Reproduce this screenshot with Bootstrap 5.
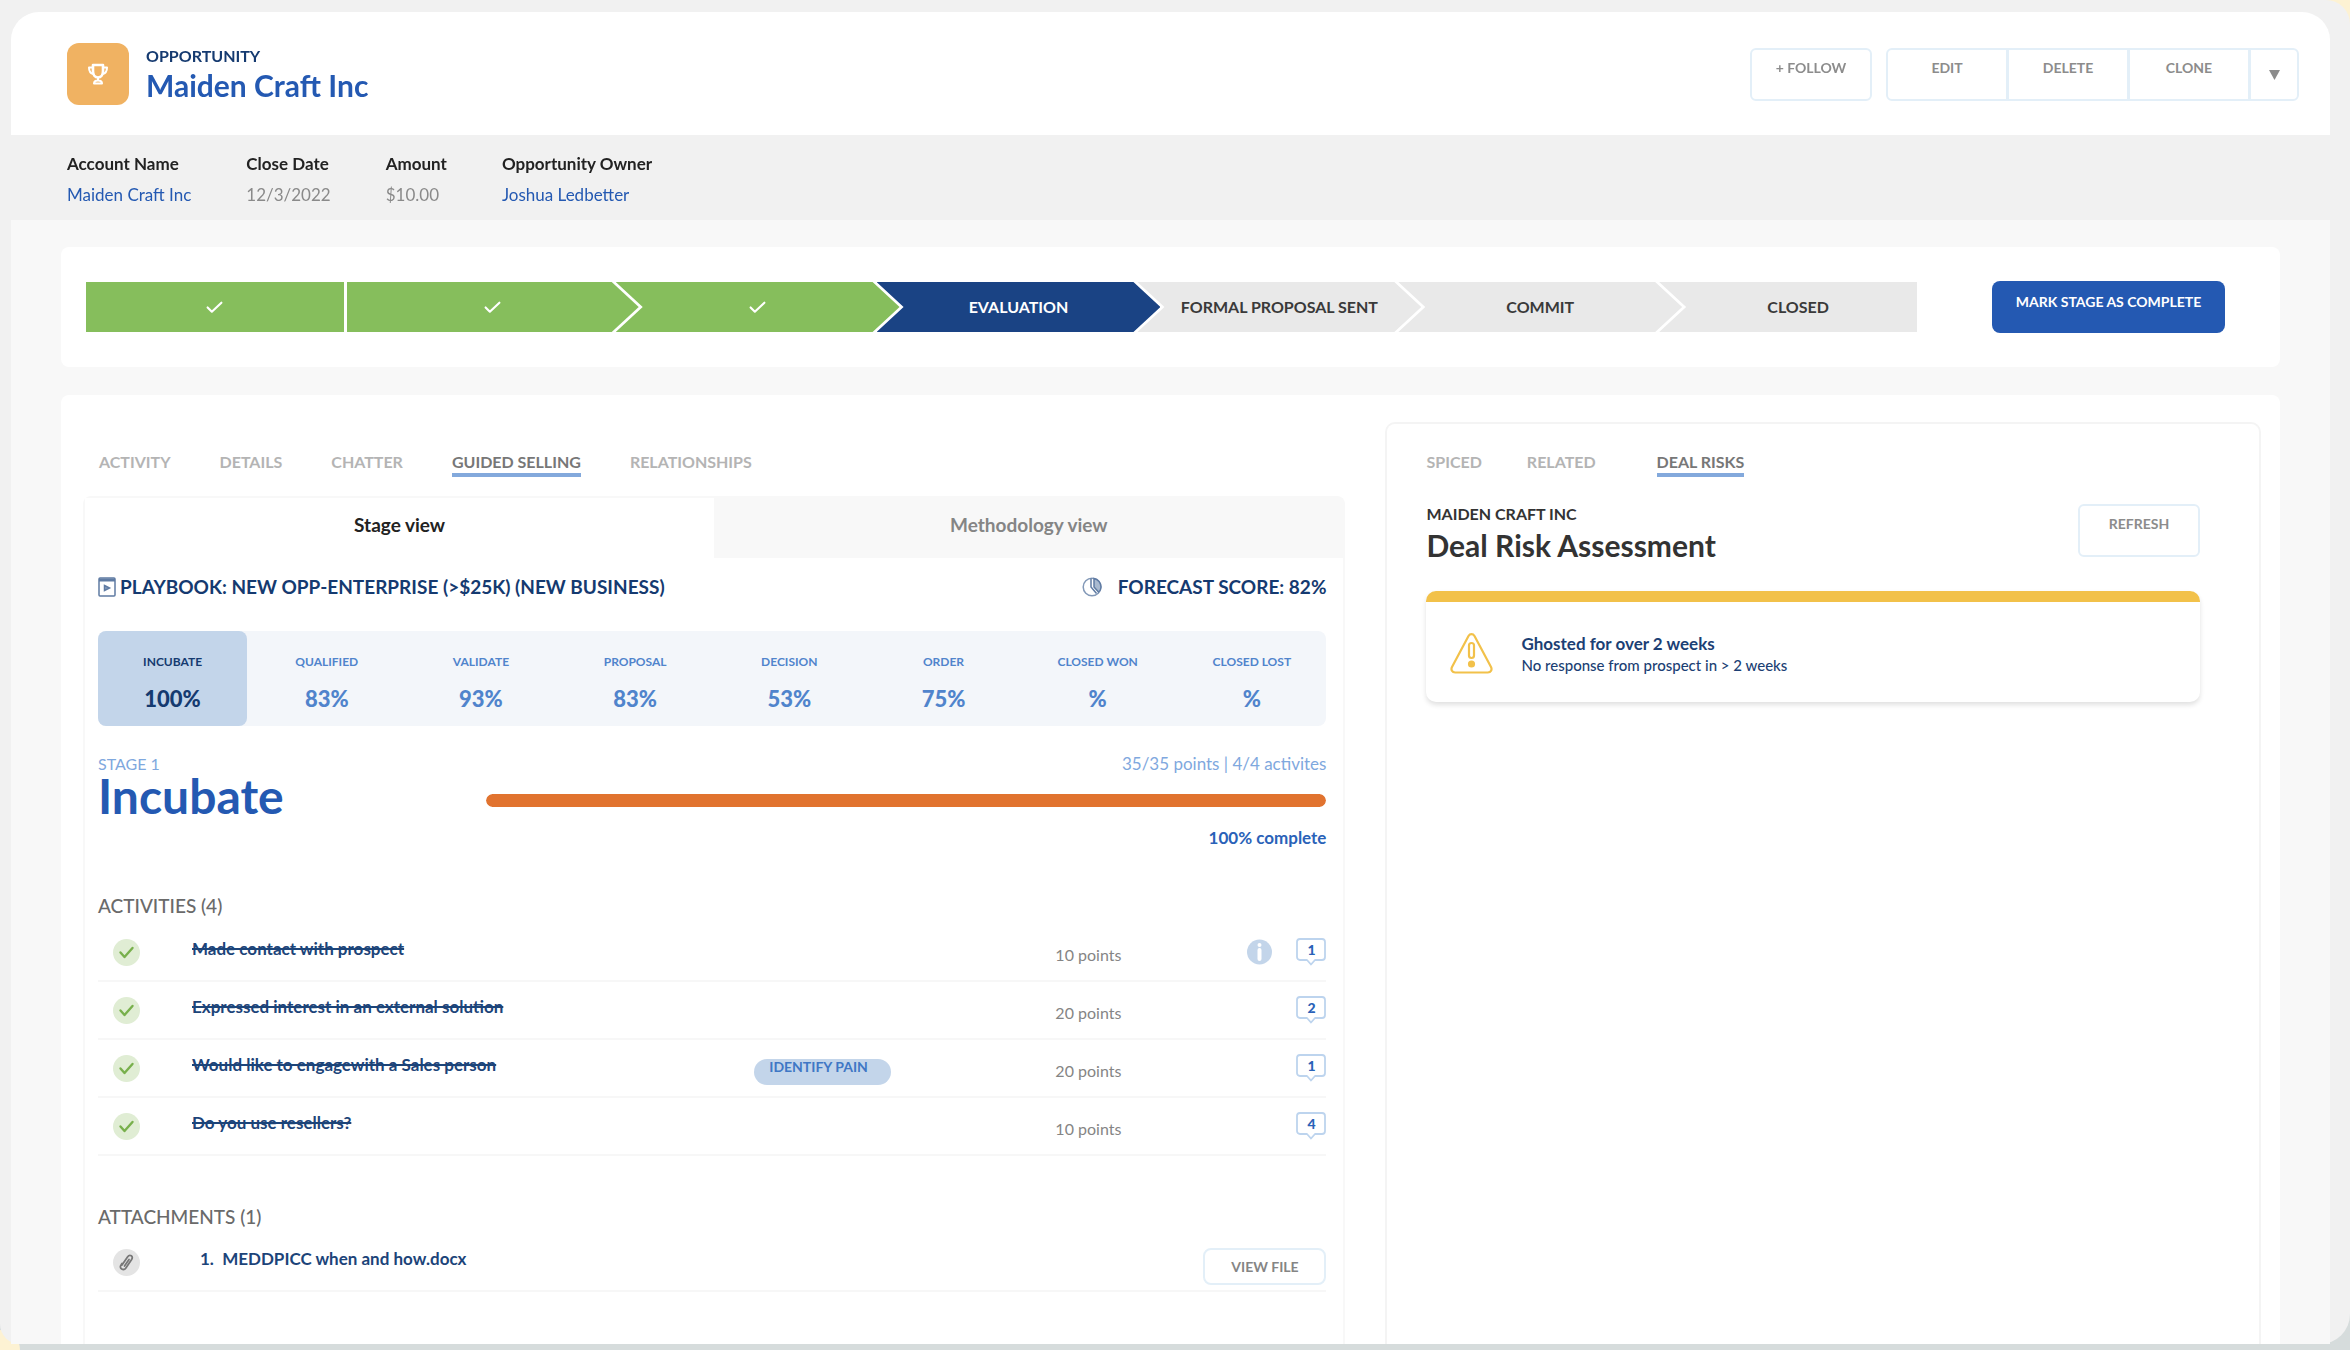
<!DOCTYPE html>
<html lang="en">
<head>
<meta charset="utf-8">
<meta name="viewport" content="width=device-width, initial-scale=1">
<title>Maiden Craft Inc – Opportunity</title>
<link href="https://cdn.jsdelivr.net/npm/bootstrap@5.3.0/dist/css/bootstrap.min.css" rel="stylesheet">
<style>
  :root { --navy:#153a70; --royal:#2459b2; --sky:#c3d5ea; --mist:#f3f6fa; --line:#e3eff8; --soft:#f8f8f8; }
  body { background:#d6dcdc; font-family:Lato, "Open Sans", sans-serif; font-size:16px; line-height:20px; color:#222; overflow-x:hidden; }
  a { text-decoration:none; }
  .frame { min-height:calc(100vh - 6px); background:#f1f1f1; border-radius:0 24px 30px 20px; padding:12px 20px 0 11px; }
  .corner-a, .corner-b { position:fixed; background:#fdf2d3; z-index:-1; }
  .corner-a { left:0; bottom:0; width:20px; height:20px; border-radius:0 20px 0 0; }
  .corner-b { right:0; top:0; width:24px; height:24px; }
  .topbar { background:#fff; border-radius:28px 28px 0 0; padding:31px 31px 30px 56px; }
  .trophy { width:62px; height:62px; border-radius:12px; background:#f0b262; margin-right:17px; }
  .eyebrow { font-weight:700; color:var(--navy); }
  .headline { font-size:30px; line-height:34px; font-weight:700; margin:2px 0 0; }
  .royal { color:var(--royal); }
  .tool { background:#fff; border:2px solid var(--line); border-radius:6px; color:#8c8c8c; font-size:14px; line-height:20px; font-weight:700; padding:8px 0 21px; width:122px; }
  .tool:hover { background:var(--mist); border-color:var(--line); color:#777; }
  .tools { gap:14px; }
  .tools .btn-group .tool + .tool { margin-left:-1px; }
  .tool.caret { width:50px; padding:14px 0 15px; }
  .facts { padding:19px 56px 15px; gap:55px; font-size:17px; }
  .facts dt { font-weight:700; margin-bottom:11px; }
  .facts dd { margin:0; color:#8a8a8a; }
  .facts a { color:var(--royal); }
  .stagearea { background:var(--soft); padding:27px 50px 0; gap:28px; }
  .sheet { background:#fff; border-radius:8px; }
  .pathcard { padding:34px 55px 34px 25px; gap:75px; }
  .path { height:50px; list-style:none; margin:0; padding:0; }
  .path li { flex:284 1 0; background:#e9e9e9; color:#3a3a3a; font-weight:700; margin-left:-23px; clip-path:polygon(0 0, calc(100% - 27px) 0, 100% 50%, calc(100% - 27px) 100%, 0 100%, 27px 50%); }
  .path li.first { flex-grow:258; margin:0 3px 0 0; clip-path:none; }
  .path li.second { flex-grow:292; margin:0; clip-path:polygon(0 0, calc(100% - 27px) 0, 100% 50%, calc(100% - 27px) 100%, 0 100%); }
  .path li.last { flex-grow:258; text-indent:20px; clip-path:polygon(0 0, 100% 0, 100% 100%, 0 100%, 27px 50%); }
  .path li.done { background:#86be5c; }
  .path li.now { background:#1a4384; color:#fff; }
  .markdone { width:233px; height:52px; background:var(--royal); color:#fff; border:0; border-radius:8px; font-size:14px; line-height:20px; font-weight:700; padding:11px 0 21px; }
  .markdone:hover { background:#1d4c9b; color:#fff; }
  .detail { border-radius:8px 8px 0 0; padding:0 19px 0 22px; gap:40px; }
  .leftside { flex:1 1 0; padding-top:57px; min-width:0; }
  .rightside { flex:0 0 40.2%; margin-top:27px; border:2px solid #f4f4f4; border-bottom:0; border-radius:10px 10px 0 0; padding:28px 59px 0 39px; min-width:0; }
  .tabline { gap:49px; }
  .tabline a { color:#b4b4b4; font-weight:700; padding-bottom:1px; border-bottom:4px solid transparent; }
  .tabline a.on { color:#777; border-color:#83a9dc; }
  .leftside > .tabline { padding-left:16px; margin-bottom:19px; }
  .rightside > .tabline { gap:45px; margin-bottom:27px; }
  .guide { border:2px solid var(--soft); border-bottom:0; border-radius:8px 8px 0 0; }
  .views button { border:0; background:var(--soft); color:#858585; font-size:19px; line-height:24px; font-weight:700; padding:15px 0 21px; }
  .views button.on { background:#fff; color:#222; }
  .guidebody { padding:17px 17px 0 13px; }
  .bookline { font-size:19px; line-height:24px; font-weight:700; color:var(--navy); margin-bottom:32px; }
  .scores { display:grid; grid-template-columns:repeat(8, 1fr); gap:5px; background:var(--mist); border-radius:8px; text-align:center; color:#5084cc; font-weight:700; margin-bottom:28px; }
  .scores > div { padding:23px 0 13px; border-radius:8px; }
  .scores .on { background:var(--sky); color:var(--navy); }
  .scores span { display:block; font-size:12px; line-height:16px; margin-bottom:15px; }
  .scores strong { display:block; font-size:22px; line-height:28px; }
  .stagename { width:388px; flex:none; }
  .pale { color:#7fa8de; }
  .bigname { font-size:48px; line-height:44px; font-weight:700; color:var(--royal); margin:0; }
  .meter { --bs-progress-height:13px; --bs-progress-border-radius:7px; --bs-progress-bg:#f6e3d6; margin:20px 0 21px; }
  .meter .progress-bar { background:#e1732f; border-radius:7px; }
  .tally { font-size:17px; }
  .complete { font-weight:700; color:#2a62b8; }
  .grouptitle { font-size:19px; line-height:24px; font-weight:500; color:#6a6a6a; margin:46px 0 6px; }
  .todo + .grouptitle { margin:49px 0 5px; }
  .todo { list-style:none; margin:0; padding:0; }
  .todo li { display:grid; grid-template-columns:79px 562fr 301fr 192fr 79px; align-items:center; min-height:58px; border-bottom:2px solid #f7f7f7; padding-left:15px; }
  .todo .what { font-size:17px; font-weight:700; color:#1c4479; padding-bottom:6px; }
  .todo del { text-decoration-thickness:2px; }
  .points { color:#858585; padding-top:5px; }
  .pain { width:137px; height:26px; border-radius:13px; background:var(--sky); color:#3f77c5; font-size:14px; line-height:16px; font-weight:700; padding-left:15px; margin-top:7px; }
  .todo svg { display:block; }
  .bubble { position:relative; width:30px; height:28px; border:0; background:none; padding:0; }
  .bubble span { position:absolute; inset:2px 0 auto; text-align:center; font-size:14px; line-height:20px; font-weight:900; color:#2a62b8; }
  .viewfile { padding:7px 0 6px; width:123px; color:#858585; margin-top:8px; justify-self:end; grid-column:4 / 6; border-radius:8px; }
  .dark { color:#333; }
  .headline.dark { margin-top:4px; }
  .risk { border-radius:10px; border-top:11px solid #f2c14a; box-shadow:0 3px 5px rgba(0,0,0,.12); padding:31px 24px 27px; margin-top:29px; gap:28px; color:#1c3f74; }
  .risk h3 { font-size:17px; line-height:22px; font-weight:700; margin:0; }
  .risk p { font-size:15px; line-height:20px; font-weight:500; margin:0; }
</style>
<script src="https://cdn.jsdelivr.net/npm/bootstrap@5.3.0/dist/js/bootstrap.bundle.min.js"></script>
</head>
<body>
<div class="corner-a"></div><div class="corner-b"></div>
<svg class="d-none" aria-hidden="true">
  <symbol id="tick" viewBox="0 0 27 27"><circle cx="13.500" cy="13.500" r="13.500" fill="#e0edd4"/><path d="M7.500 13.500l4 4.500 8-9" fill="none" stroke="#78b04c" stroke-width="2.400" stroke-linecap="round" stroke-linejoin="round"/></symbol>
  <symbol id="check" viewBox="0 0 16 12"><path d="M1.500 6l4 4L14.500 1.500" fill="none" stroke="#fff" stroke-width="2" stroke-linecap="round" stroke-linejoin="round"/></symbol>
  <symbol id="talk" viewBox="0 0 30 28"><path d="M4 1h22a3 3 0 0 1 3 3v15a3 3 0 0 1-3 3h-7l-4 4.500L11 22H4a3 3 0 0 1-3-3V4a3 3 0 0 1 3-3z" fill="#fff" stroke="#bdd4ee" stroke-width="1.800" stroke-linejoin="round"/></symbol>
</svg>
<div class="frame d-flex flex-column">
  <header class="topbar d-flex align-items-center">
    <div class="trophy d-flex align-items-center justify-content-center">
      <svg width="22" height="23" viewBox="0 0 22 23" fill="none" stroke="#fff" stroke-width="2" stroke-linejoin="round"><path d="M6 2h10v6c0 4-2 6.500-5 6.500S6 12 6 8z" stroke-width="2.600"/><path d="M6 4.500H2c0 4 1.500 6 4.500 6.500M16 4.500h4c0 4-1.500 6-4.500 6.500M11 14.500v3M7 20.500c0-2 1-3 4-3s4 1 4 3z"/></svg>
    </div>
    <div class="me-auto">
      <div class="eyebrow">OPPORTUNITY</div>
      <h1 class="headline royal">Maiden Craft Inc</h1>
    </div>
    <div class="tools d-flex">
      <button type="button" class="btn tool">+ FOLLOW</button>
      <div class="btn-group">
        <button type="button" class="btn tool">EDIT</button>
        <button type="button" class="btn tool">DELETE</button>
        <button type="button" class="btn tool">CLONE</button>
        <button type="button" class="btn tool caret" aria-label="More actions"><svg width="11" height="10" viewBox="0 0 11 10"><path d="M0 0h11L5.500 10z" fill="#8c8c8c"/></svg></button>
      </div>
    </div>
  </header>

  <dl class="facts d-flex mb-0">
    <div><dt>Account Name</dt><dd><a href="#">Maiden Craft Inc</a></dd></div>
    <div><dt>Close Date</dt><dd>12/3/2022</dd></div>
    <div><dt>Amount</dt><dd>$10.00</dd></div>
    <div><dt>Opportunity Owner</dt><dd><a href="#">Joshua Ledbetter</a></dd></div>
  </dl>

  <main class="stagearea d-flex flex-column flex-grow-1">
    <section class="sheet pathcard d-flex align-items-center">
      <ol class="path d-flex flex-grow-1">
        <li class="first done d-flex align-items-center justify-content-center"><svg width="17" height="13"><use href="#check"/></svg></li>
        <li class="second done d-flex align-items-center justify-content-center"><svg width="17" height="13"><use href="#check"/></svg></li>
        <li class="done d-flex align-items-center justify-content-center"><svg width="17" height="13"><use href="#check"/></svg></li>
        <li class="now d-flex align-items-center justify-content-center">EVALUATION</li>
        <li class="d-flex align-items-center justify-content-center">FORMAL PROPOSAL SENT</li>
        <li class="d-flex align-items-center justify-content-center">COMMIT</li>
        <li class="last d-flex align-items-center justify-content-center">CLOSED</li>
      </ol>
      <button type="button" class="btn markdone">MARK STAGE AS COMPLETE</button>
    </section>

    <section class="sheet detail d-flex flex-grow-1">
      <div class="leftside d-flex flex-column">
        <nav class="tabline d-flex">
          <a href="#">ACTIVITY</a><a href="#">DETAILS</a><a href="#">CHATTER</a><a href="#" class="on">GUIDED SELLING</a><a href="#">RELATIONSHIPS</a>
        </nav>
        <div class="guide flex-grow-1">
          <div class="views d-flex">
            <button type="button" class="on w-50">Stage view</button>
            <button type="button" class="w-50">Methodology view</button>
          </div>
          <div class="guidebody">
            <div class="bookline d-flex align-items-center">
              <svg class="me-1" width="18" height="20" viewBox="0 0 18 20" fill="none" stroke="#5f7ba3" stroke-width="1.500"><rect x="1" y="1" width="16" height="18" rx="1"/><path d="M1 3h16" stroke-width="3"/><path d="M6.500 8v6M6.500 8.500l5 2.500-5 2.500z" fill="#8aa0bf"/></svg>
              <span class="me-auto">PLAYBOOK: NEW OPP-ENTERPRISE (&gt;$25K) (NEW BUSINESS)</span>
              <svg class="me-3" width="20" height="20" viewBox="0 0 20 20" fill="none" stroke="#5f7ba3" stroke-width="1.500"><circle cx="10" cy="10" r="8.800" stroke="#8399b8"/><path d="M9 1.500V10l5.500 6.500"/><path d="M12 1.500a8.500 8.500 0 0 1 7 8.500c0 2-1 4-2.500 5L12 10z" fill="#a9bad0"/></svg>
              <span>FORECAST SCORE: 82%</span>
            </div>
            <div class="scores">
              <div class="on"><span>INCUBATE</span><strong>100%</strong></div>
              <div><span>QUALIFIED</span><strong>83%</strong></div>
              <div><span>VALIDATE</span><strong>93%</strong></div>
              <div><span>PROPOSAL</span><strong>83%</strong></div>
              <div><span>DECISION</span><strong>53%</strong></div>
              <div><span>ORDER</span><strong>75%</strong></div>
              <div><span>CLOSED WON</span><strong>%</strong></div>
              <div><span>CLOSED LOST</span><strong>%</strong></div>
            </div>
            <div class="d-flex">
              <div class="stagename">
                <div class="pale">STAGE 1</div>
                <h2 class="bigname">Incubate</h2>
              </div>
              <div class="flex-grow-1 text-end">
                <div class="pale tally">35/35 points | 4/4 activites</div>
                <div class="progress meter" role="progressbar" aria-label="Stage progress" aria-valuenow="100" aria-valuemin="0" aria-valuemax="100"><div class="progress-bar" style="width:100%"></div></div>
                <div class="complete tally">100% complete</div>
              </div>
            </div>
            <h3 class="grouptitle">ACTIVITIES (4)</h3>
            <ul class="todo">
              <li><svg width="27" height="27"><use href="#tick"/></svg><span class="what"><del>Made contact with prospect</del></span><span></span><span class="points">10 points</span>
                <span class="d-flex justify-content-between align-items-center"><svg width="25" height="26" viewBox="0 0 25 26"><circle cx="12.500" cy="13" r="12.500" fill="#c3d5ea"/><path d="M12.500 11v9" stroke="#fff" stroke-width="4" stroke-linecap="round"/><circle cx="12.500" cy="6" r="2" fill="#fff"/></svg><button type="button" class="bubble"><svg width="30" height="28"><use href="#talk"/></svg><span>1</span></button></span></li>
              <li><svg width="27" height="27"><use href="#tick"/></svg><span class="what"><del>Expressed interest in an external solution</del></span><span></span><span class="points">20 points</span>
                <span class="d-flex justify-content-end"><button type="button" class="bubble"><svg width="30" height="28"><use href="#talk"/></svg><span>2</span></button></span></li>
              <li><svg width="27" height="27"><use href="#tick"/></svg><span class="what"><del>Would like to engagewith a Sales person</del></span><span class="pain">IDENTIFY PAIN</span><span class="points">20 points</span>
                <span class="d-flex justify-content-end"><button type="button" class="bubble"><svg width="30" height="28"><use href="#talk"/></svg><span>1</span></button></span></li>
              <li><svg width="27" height="27"><use href="#tick"/></svg><span class="what"><del>Do you use resellers?</del></span><span></span><span class="points">10 points</span>
                <span class="d-flex justify-content-end"><button type="button" class="bubble"><svg width="30" height="28"><use href="#talk"/></svg><span>4</span></button></span></li>
            </ul>
            <h3 class="grouptitle">ATTACHMENTS (1)</h3>
            <ul class="todo">
              <li><svg width="27" height="27" viewBox="0 0 27 27"><circle cx="13.500" cy="13.500" r="13.500" fill="#e4e4e4"/><path d="M9 16l5.500-8c1-1.500 2.500-2 3.800-1.200s1.200 2.400.3 3.800l-5.700 8.300c-1 1.500-2.700 2-4.200 1.100s-1.700-2.600-.7-4l1-1.500M11.500 17l4.500-6.500" fill="none" stroke="#777" stroke-width="1.800" stroke-linecap="round"/></svg><span class="what ps-2">1.&nbsp; MEDDPICC when and how.docx</span><button type="button" class="btn tool viewfile">VIEW FILE</button></li>
            </ul>
          </div>
        </div>
      </div>

      <aside class="rightside">
        <nav class="tabline d-flex">
          <a href="#">SPICED</a><a href="#" class="me-3">RELATED</a><a href="#" class="on">DEAL RISKS</a>
        </nav>
        <div class="d-flex align-items-start justify-content-between">
          <div>
            <div class="dark fw-bold">MAIDEN CRAFT INC</div>
            <h2 class="headline dark">Deal Risk Assessment</h2>
          </div>
          <button type="button" class="btn tool">REFRESH</button>
        </div>
        <div class="risk d-flex">
          <svg width="43" height="41" viewBox="0 0 43 41" fill="none" stroke="#f2c14a" stroke-width="2.200" stroke-linejoin="round"><path d="M18.500 3c1.500-2.400 4.500-2.400 6 0l16.500 31c1.300 2.700 0 5.500-3.200 5.500H5.200C2 39.500.7 36.700 2 34z"/><rect x="19" y="10" width="5" height="15" rx="2.500"/><circle cx="21.500" cy="31" r="2.500" fill="#f2c14a"/></svg>
          <div>
            <h3>Ghosted for over 2 weeks</h3>
            <p>No response from prospect in &gt; 2 weeks</p>
          </div>
        </div>
      </aside>
    </section>
  </main>
</div>
</body>
</html>
